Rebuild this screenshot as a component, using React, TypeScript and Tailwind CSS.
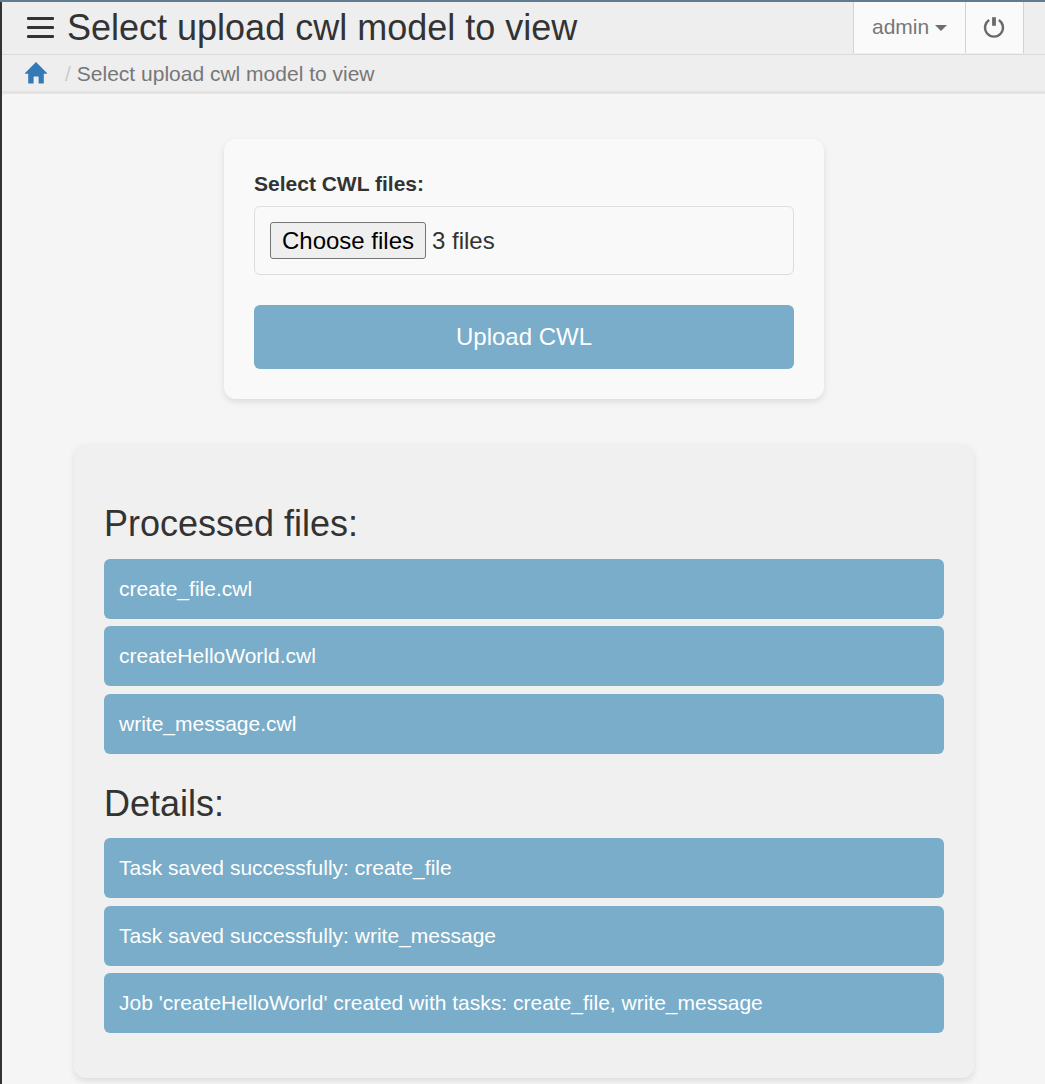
import React from "react";

const processedFiles = ["create_file.cwl", "createHelloWorld.cwl", "write_message.cwl"];
const details = [
  "Task saved successfully: create_file",
  "Task saved successfully: write_message",
  "Job 'createHelloWorld' created with tasks: create_file, write_message",
];

function MenuIcon() {
  return (
    <svg className="block h-[22px] w-[27px]" viewBox="0 0 27 22" fill="#333333">
      <rect x="0" y="0" width="27" height="3" rx="1" />
      <rect x="0" y="9" width="27" height="3" rx="1" />
      <rect x="0" y="18" width="27" height="3" rx="1" />
    </svg>
  );
}

function HomeIcon() {
  return (
    <svg className="block h-[22px] w-[22px]" viewBox="0 0 22 22" fill="#337ab7">
      <path d="M11 0 L22 11 V11.8 H18.8 V21.4 H13.6 V14.4 H8.6 V21.4 H3.2 V11.8 H0 V11 Z" />
    </svg>
  );
}

function PowerIcon() {
  return (
    <svg className="block h-[22px] w-[22px]" viewBox="0 0 22 22" fill="none" stroke="#6a6a6a">
      <path d="M6.2 4 A9 9 0 1 0 15.8 4" strokeWidth="2.4" />
      <path d="M11 1.2 V9.8" strokeWidth="3.8" />
    </svg>
  );
}

function ResultList({ title, items, className }: { title: string; items: string[]; className: string }) {
  return (
    <section className={className}>
      <h3 className="mb-[14.6px] text-[36px] leading-[40px]">{title}</h3>
      <ul className="flex flex-col gap-[7.4px]">
        {items.map((item) => (
          <li key={item} className="flex h-[60px] items-center rounded-[6px] bg-[#79adc9] px-[15px] text-[21px] leading-[32px] text-white">
            {item}
          </li>
        ))}
      </ul>
    </section>
  );
}

export default function App() {
  return (
    <div className="h-[1084px] overflow-hidden border-t-2 border-[#607d8f] bg-[#f5f5f5] font-['Liberation_Sans',Arial,sans-serif] text-[#333333]">
      <div className="h-full border-l-2 border-[#333333]">
        <header className="flex h-[53px] justify-between border-b border-[#dadada] bg-[#eeeeee]">
          <div className="flex items-center pl-[25px]">
            <MenuIcon />
            <h1 className="ml-[13px] text-[36px] leading-[52px] whitespace-nowrap">Select upload cwl model to view</h1>
          </div>
          <div className="mr-[21px] flex h-[51px] border-x border-[#d2d2d2] bg-[#fafafa] text-[#777777]">
            <button className="flex w-[112px] items-center border-r border-[#d2d2d2] pb-[2px] pl-[18px] text-[21px]">
              admin
              <svg className="mt-[2px] ml-[6px] h-[6px] w-[12px]" viewBox="0 0 12 6" fill="#6e6e6e">
                <path d="M0 0 H12 L6 6 Z" />
              </svg>
            </button>
            <button className="flex w-[57px] items-center justify-center pr-px pb-px">
              <PowerIcon />
            </button>
          </div>
        </header>
        <nav className="flex h-[39px] items-center border-b-3 border-[#e3e3e3] bg-[#eeeeee] pl-[23px] text-[21px] text-[#777777]">
          <HomeIcon />
          <span className="ml-[18px] pt-[2px] text-[#cccccc]">/</span>
          <span className="ml-[6px] pt-[2px] whitespace-nowrap">Select upload cwl model to view</span>
        </nav>
        <main className="flex flex-col items-center pl-px">
          <form className="mt-[45px] h-[260px] w-[600px] rounded-[12px] bg-[#f9f9f9] p-[30px] shadow-[0_3px_6px_rgba(0,0,0,0.1)]">
            <label className="block text-[21px] leading-[30px] font-bold">Select CWL files:</label>
            <div className="mt-[7px] flex h-[69px] items-center rounded-[6px] border border-[#dddddd] px-[15px] text-[24px]">
              <button type="button" className="h-[37px] w-[156px] rounded-[3px] border border-[#767676] bg-[#efefef] leading-[35px] whitespace-nowrap text-black">
                Choose files
              </button>
              <span className="ml-[6px]">3 files</span>
            </div>
            <button type="button" className="mt-[30px] h-[64px] w-full rounded-[6px] bg-[#79adc9] text-[24px] text-white">
              Upload CWL
            </button>
          </form>
          <div className="mt-[45px] h-[634px] w-[900px] rounded-[12px] bg-[#f0f0f0] px-[30px] pt-[60.4px] shadow-[0_3px_6px_rgba(0,0,0,0.1)]">
            <ResultList title="Processed files:" items={processedFiles} className="" />
            <ResultList title="Details:" items={details} className="mt-[30px]" />
          </div>
        </main>
      </div>
    </div>
  );
}
